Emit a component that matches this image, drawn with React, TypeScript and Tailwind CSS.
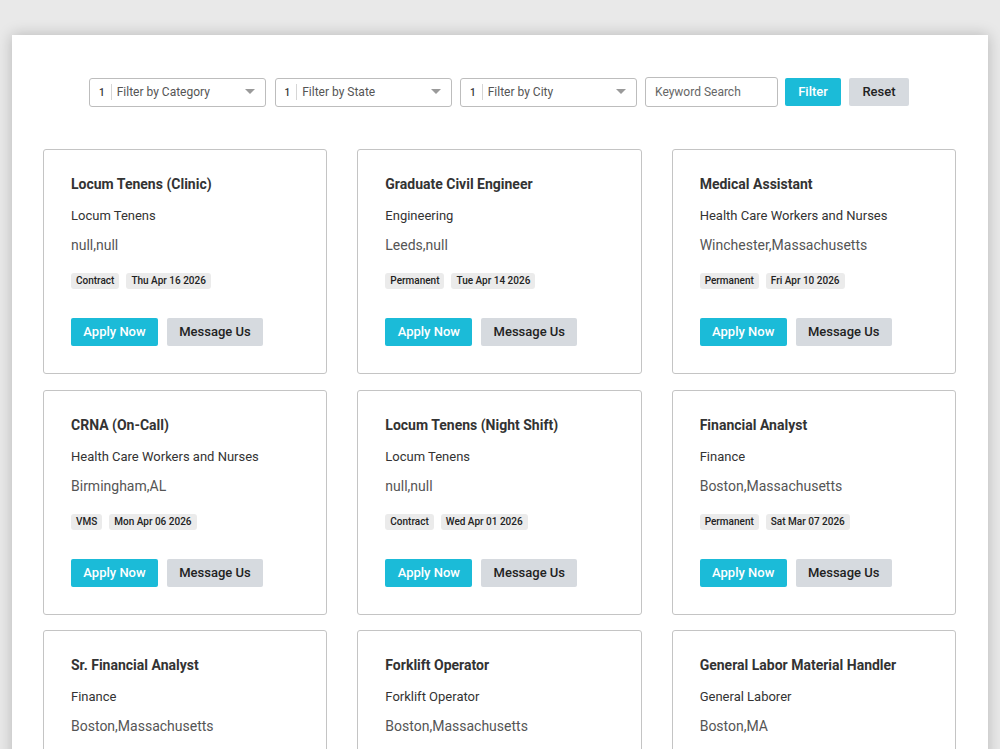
import React from "react";

type Job = { title: string; cat: string; loc: string; type: string; date: string };

const jobs: Job[] = [
  { title: "Locum Tenens (Clinic)", cat: "Locum Tenens", loc: "null,null", type: "Contract", date: "Thu Apr 16 2026" },
  { title: "Graduate Civil Engineer", cat: "Engineering", loc: "Leeds,null", type: "Permanent", date: "Tue Apr 14 2026" },
  { title: "Medical Assistant", cat: "Health Care Workers and Nurses", loc: "Winchester,Massachusetts", type: "Permanent", date: "Fri Apr 10 2026" },
  { title: "CRNA (On-Call)", cat: "Health Care Workers and Nurses", loc: "Birmingham,AL", type: "VMS", date: "Mon Apr 06 2026" },
  { title: "Locum Tenens (Night Shift)", cat: "Locum Tenens", loc: "null,null", type: "Contract", date: "Wed Apr 01 2026" },
  { title: "Financial Analyst", cat: "Finance", loc: "Boston,Massachusetts", type: "Permanent", date: "Sat Mar 07 2026" },
  { title: "Sr. Financial Analyst", cat: "Finance", loc: "Boston,Massachusetts", type: "Permanent", date: "Fri Mar 06 2026" },
  { title: "Forklift Operator", cat: "Forklift Operator", loc: "Boston,Massachusetts", type: "Contract", date: "Thu Mar 05 2026" },
  { title: "General Labor Material Handler", cat: "General Laborer", loc: "Boston,MA", type: "Contract", date: "Wed Mar 04 2026" },
];

function Select({ label }: { label: string }) {
  return (
    <div className="flex items-center w-[177px] h-[29px] border border-[#bdbdbd] rounded-[3px] bg-white">
      <span className="pl-[9px] pr-[6px] text-[10px] text-[#333] font-medium">1</span>
      <span className="w-px h-[16px] bg-[#d6d6d6]"></span>
      <span className="pl-[5px] flex-1 text-[12px] text-[#555]">{label}</span>
      <svg width="10" height="6" viewBox="0 0 10 6" className="mr-[10px]">
        <path d="M0 0 L10 0 L5 5 Z" fill="#9a9a9a" />
      </svg>
    </div>
  );
}

function Card({ j }: { j: Job }) {
  return (
    <div className="border border-[#c4c4c4] rounded-[3px] bg-white pt-[24px] px-[27px] pb-[27px]">
      <div className="text-[14px] leading-[20px] font-bold text-[#333]">{j.title}</div>
      <div className="mt-[12px] text-[13px] leading-[20px] font-normal text-[#333]">{j.cat}</div>
      <div className="mt-[9px] text-[14px] leading-[20px] text-[#555]">{j.loc}</div>
      <div className="mt-[18px] flex gap-[7px]">
        <span className="h-[16px] px-[5px] rounded-[3px] bg-[#ebebeb] text-[10px] leading-[16px] font-medium text-[#222]">{j.type}</span>
        <span className="h-[16px] px-[5px] rounded-[3px] bg-[#ebebeb] text-[10px] leading-[16px] font-medium text-[#222]">{j.date}</span>
      </div>
      <div className="mt-[29px] flex gap-[9px]">
        <button className="h-[28px] w-[87px] rounded-[2px] bg-[#1bbbd8] text-white text-[13px] font-medium">Apply Now</button>
        <button className="h-[28px] w-[96px] rounded-[2px] bg-[#d6dadf] text-[#222] text-[13px] font-medium">Message Us</button>
      </div>
    </div>
  );
}

export default function App() {
  return (
    <div
      className="h-[749px] overflow-hidden bg-[#e9e9e9] pt-[35px] px-[12px]"
      style={{ fontFamily: "Roboto, 'Liberation Sans', sans-serif" }}
    >
      <div className="w-[976px] h-[800px] bg-white shadow-[0_0_14px_rgba(0,0,0,0.22)] pt-[42px] pl-[31px] pr-[32px]">
        <div className="flex items-center pl-[46px]">
          <Select label="Filter by Category" />
          <div className="ml-[8.5px]">
            <Select label="Filter by State" />
          </div>
          <div className="ml-[8.5px]">
            <Select label="Filter by City" />
          </div>
          <div className="ml-[8px] w-[133px] h-[30px] border border-[#bdbdbd] rounded-[3px] flex items-center pl-[9px] text-[12px] text-[#666]">
            Keyword Search
          </div>
          <button className="ml-[7px] h-[28px] w-[56px] rounded-[2px] bg-[#1bbbd8] text-white text-[13px] font-medium">Filter</button>
          <button className="ml-[8px] h-[28px] w-[60px] rounded-[2px] bg-[#d6dadf] text-[#222] text-[13px] font-medium">Reset</button>
        </div>
        <div className="mt-[42px] grid grid-cols-3 gap-x-[30px] gap-y-[15.5px]">
          {jobs.map((j, i) => (
            <Card key={i} j={j} />
          ))}
        </div>
      </div>
    </div>
  );
}
